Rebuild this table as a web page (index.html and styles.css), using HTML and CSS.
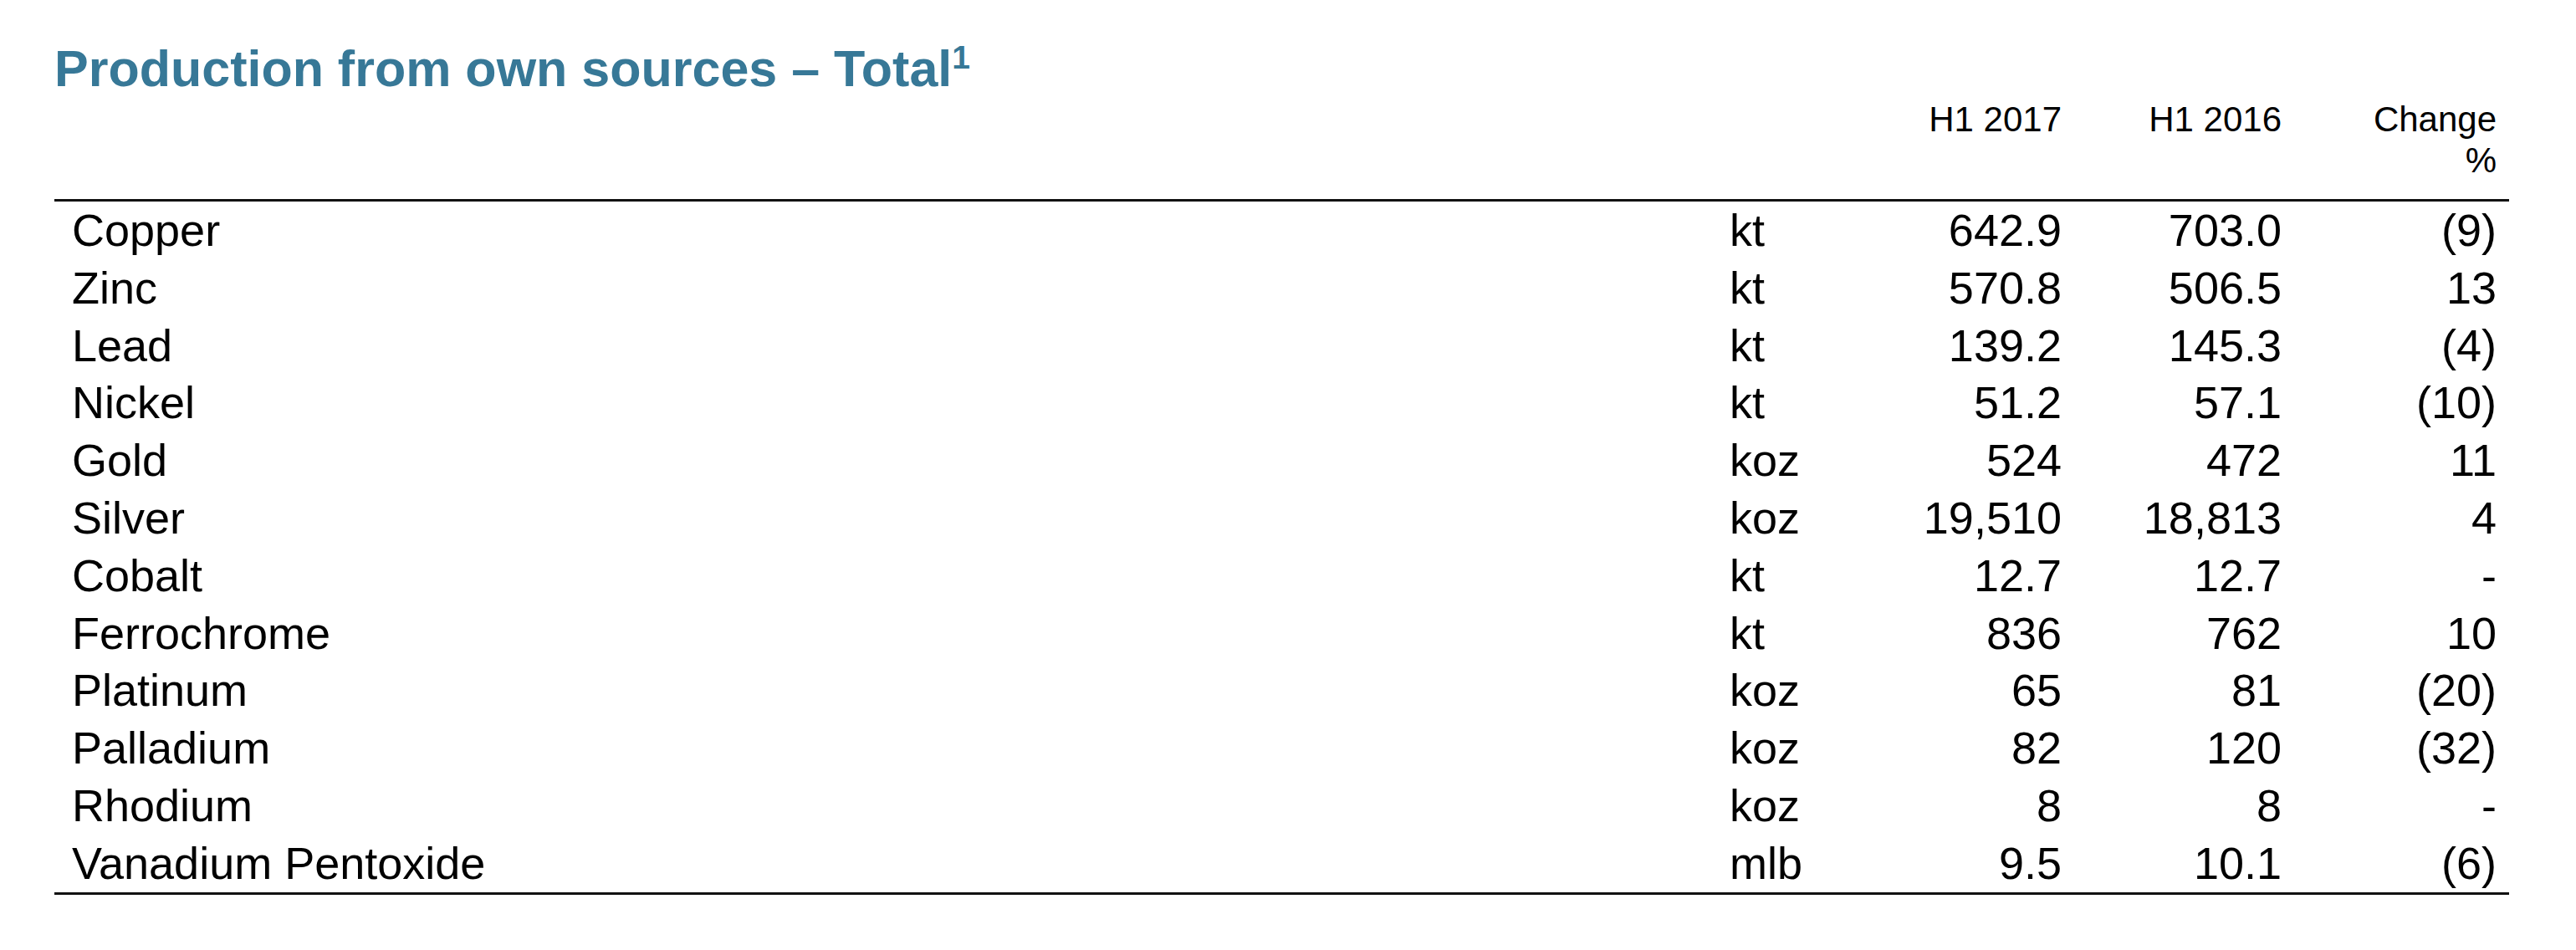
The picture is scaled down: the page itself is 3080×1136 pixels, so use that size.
FILE: index.html
```html
<!DOCTYPE html>
<html lang="en">
<head>
<meta charset="utf-8">
<title>Production from own sources – Total</title>
<link rel="stylesheet" href="styles.css">
</head>
<body>
<main class="page">
  <h1 class="title">Production from own sources – Total<sup class="fn">1</sup></h1>
  <div class="row head">
    <span></span>
    <span></span>
    <span class="num">H1 2017</span>
    <span class="num">H1 2016</span>
    <span class="num">Change<br>%</span>
  </div>
  <div class="body">
    <div class="row"><span>Copper</span><span>kt</span><span class="num">642.9</span><span class="num">703.0</span><span class="num">(9)</span></div>
    <div class="row"><span>Zinc</span><span>kt</span><span class="num">570.8</span><span class="num">506.5</span><span class="num">13</span></div>
    <div class="row"><span>Lead</span><span>kt</span><span class="num">139.2</span><span class="num">145.3</span><span class="num">(4)</span></div>
    <div class="row"><span>Nickel</span><span>kt</span><span class="num">51.2</span><span class="num">57.1</span><span class="num">(10)</span></div>
    <div class="row"><span>Gold</span><span>koz</span><span class="num">524</span><span class="num">472</span><span class="num">11</span></div>
    <div class="row"><span>Silver</span><span>koz</span><span class="num">19,510</span><span class="num">18,813</span><span class="num">4</span></div>
    <div class="row"><span>Cobalt</span><span>kt</span><span class="num">12.7</span><span class="num">12.7</span><span class="num">-</span></div>
    <div class="row"><span>Ferrochrome</span><span>kt</span><span class="num">836</span><span class="num">762</span><span class="num">10</span></div>
    <div class="row"><span>Platinum</span><span>koz</span><span class="num">65</span><span class="num">81</span><span class="num">(20)</span></div>
    <div class="row"><span>Palladium</span><span>koz</span><span class="num">82</span><span class="num">120</span><span class="num">(32)</span></div>
    <div class="row"><span>Rhodium</span><span>koz</span><span class="num">8</span><span class="num">8</span><span class="num">-</span></div>
    <div class="row"><span>Vanadium Pentoxide</span><span>mlb</span><span class="num">9.5</span><span class="num">10.1</span><span class="num">(6)</span></div>
  </div>
</main>
</body>
</html>
```

FILE: styles.css
```css
html, body {
  margin: 0;
  padding: 0;
  background: #ffffff;
}

.page {
  width: 2935px;
  padding: 47px 0 0 65px;
  font-family: "Liberation Sans", Arial, Helvetica, sans-serif;
  color: #000000;
}

.title {
  margin: 0;
  font-size: 61px;
  line-height: 70px;
  font-weight: bold;
  color: #377897;
}

.fn {
  font-size: 39px;
  line-height: 0;
  vertical-align: 21px;
}

.row {
  display: grid;
  grid-template-columns: 1982px 200px 197px 263px 257px;
  padding: 0 15px 0 21px;
}

.head {
  font-size: 42px;
  line-height: 49px;
  padding-top: 1px;
  padding-bottom: 22px;
  border-bottom: 3px solid #111111;
}

.body {
  border-bottom: 3px solid #111111;
}

.body .row {
  font-size: 54px;
  line-height: 68.8px;
}

.num {
  text-align: right;
}
```
